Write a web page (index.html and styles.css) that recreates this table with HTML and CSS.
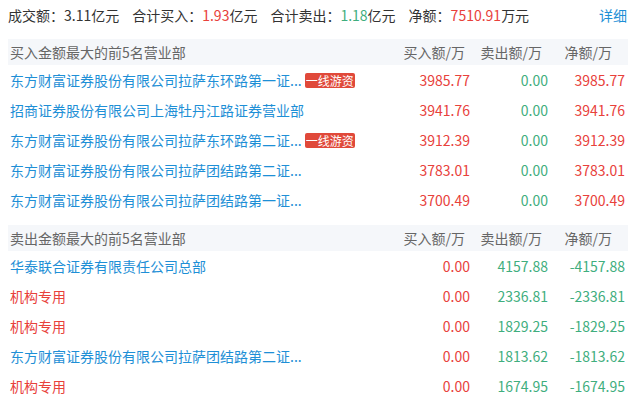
FILE: index.html
```html
<!DOCTYPE html>
<html lang="zh-CN">
<head>
<meta charset="utf-8">
<link rel="stylesheet" href="styles.css">
</head>
<body>
<div class="wrap">
  <div class="summary">
    <span class="item">成交额：3.11亿元</span>
    <span class="item">合计买入：<span class="red">1.93</span>亿元</span>
    <span class="item">合计卖出：<span class="green">1.18</span>亿元</span>
    <span class="item">净额：<span class="red">7510.91</span>万元</span>
    <a class="more">详细</a>
  </div>

  <div class="table">
    <div class="row head">
      <div class="name">买入金额最大的前5名营业部</div>
      <div class="num h1">买入额/万</div>
      <div class="num h2">卖出额/万</div>
      <div class="num h3">净额/万</div>
    </div>
    <div class="row">
      <div class="name"><span class="txt blue">东方财富证券股份有限公司拉萨东环路第一证...</span><span class="badge">一线游资</span></div>
      <div class="num red">3985.77</div><div class="num green">0.00</div><div class="num red">3985.77</div>
    </div>
    <div class="row">
      <div class="name"><span class="txt blue">招商证券股份有限公司上海牡丹江路证券营业部</span></div>
      <div class="num red">3941.76</div><div class="num green">0.00</div><div class="num red">3941.76</div>
    </div>
    <div class="row">
      <div class="name"><span class="txt blue">东方财富证券股份有限公司拉萨东环路第二证...</span><span class="badge">一线游资</span></div>
      <div class="num red">3912.39</div><div class="num green">0.00</div><div class="num red">3912.39</div>
    </div>
    <div class="row">
      <div class="name"><span class="txt blue">东方财富证券股份有限公司拉萨团结路第二证...</span></div>
      <div class="num red">3783.01</div><div class="num green">0.00</div><div class="num red">3783.01</div>
    </div>
    <div class="row">
      <div class="name"><span class="txt blue">东方财富证券股份有限公司拉萨团结路第一证...</span></div>
      <div class="num red">3700.49</div><div class="num green">0.00</div><div class="num red">3700.49</div>
    </div>
  </div>

  <div class="table second">
    <div class="row head">
      <div class="name">卖出金额最大的前5名营业部</div>
      <div class="num h1">买入额/万</div>
      <div class="num h2">卖出额/万</div>
      <div class="num h3">净额/万</div>
    </div>
    <div class="row">
      <div class="name"><span class="txt blue">华泰联合证券有限责任公司总部</span></div>
      <div class="num red">0.00</div><div class="num green">4157.88</div><div class="num green">-4157.88</div>
    </div>
    <div class="row">
      <div class="name"><span class="txt red">机构专用</span></div>
      <div class="num red">0.00</div><div class="num green">2336.81</div><div class="num green">-2336.81</div>
    </div>
    <div class="row">
      <div class="name"><span class="txt red">机构专用</span></div>
      <div class="num red">0.00</div><div class="num green">1829.25</div><div class="num green">-1829.25</div>
    </div>
    <div class="row">
      <div class="name"><span class="txt blue">东方财富证券股份有限公司拉萨团结路第二证...</span></div>
      <div class="num red">0.00</div><div class="num green">1813.62</div><div class="num green">-1813.62</div>
    </div>
    <div class="row">
      <div class="name"><span class="txt red">机构专用</span></div>
      <div class="num red">0.00</div><div class="num green">1674.95</div><div class="num green">-1674.95</div>
    </div>
  </div>
</div>
</body>
</html>
```

FILE: styles.css
```css
html, body {
  margin: 0;
  padding: 0;
  background: #fff;
}
body {
  font-family: "Microsoft YaHei", "Noto Sans CJK SC", sans-serif;
  font-size: 14px;
  color: #333;
  overflow: hidden;
}
.wrap {
  width: 620px;
  margin-left: 8px;
}
.summary {
  display: flex;
  align-items: center;
  height: 30px;
  line-height: 30px;
  margin-bottom: 9px;
}
.summary .item {
  margin-right: 13px;
  white-space: nowrap;
}
.summary .more {
  margin-left: auto;
  color: #1e8fd6;
  margin-right: 1px;
}
.red { color: #e8413b; }
.green { color: #3fae7e; }
.blue { color: #1e8fd6; }
.table.second {
  margin-top: 10px;
}
.row {
  display: grid;
  grid-template-columns: 1fr 80px 78px 77px;
  padding-right: 3px;
  height: 30px;
  align-items: center;
}
.row.head {
  height: 26px;
  background: #f5f7fa;
  color: #666;
}
.name {
  display: flex;
  align-items: center;
  padding-left: 2px;
  min-width: 0;
  white-space: nowrap;
}
.txt {
  white-space: nowrap;
}
.badge {
  margin-left: 3px;
  background: #e0493a;
  color: #fff;
  font-size: 12px;
  line-height: 15px;
  height: 15px;
  padding: 0 1px;
  border-radius: 2px;
}
.num {
  text-align: right;
  white-space: nowrap;
}
.head .h1 { padding-right: 5px; }
.head .h2 { padding-right: 6px; }
.head .h3 { padding-right: 13px; }
```
